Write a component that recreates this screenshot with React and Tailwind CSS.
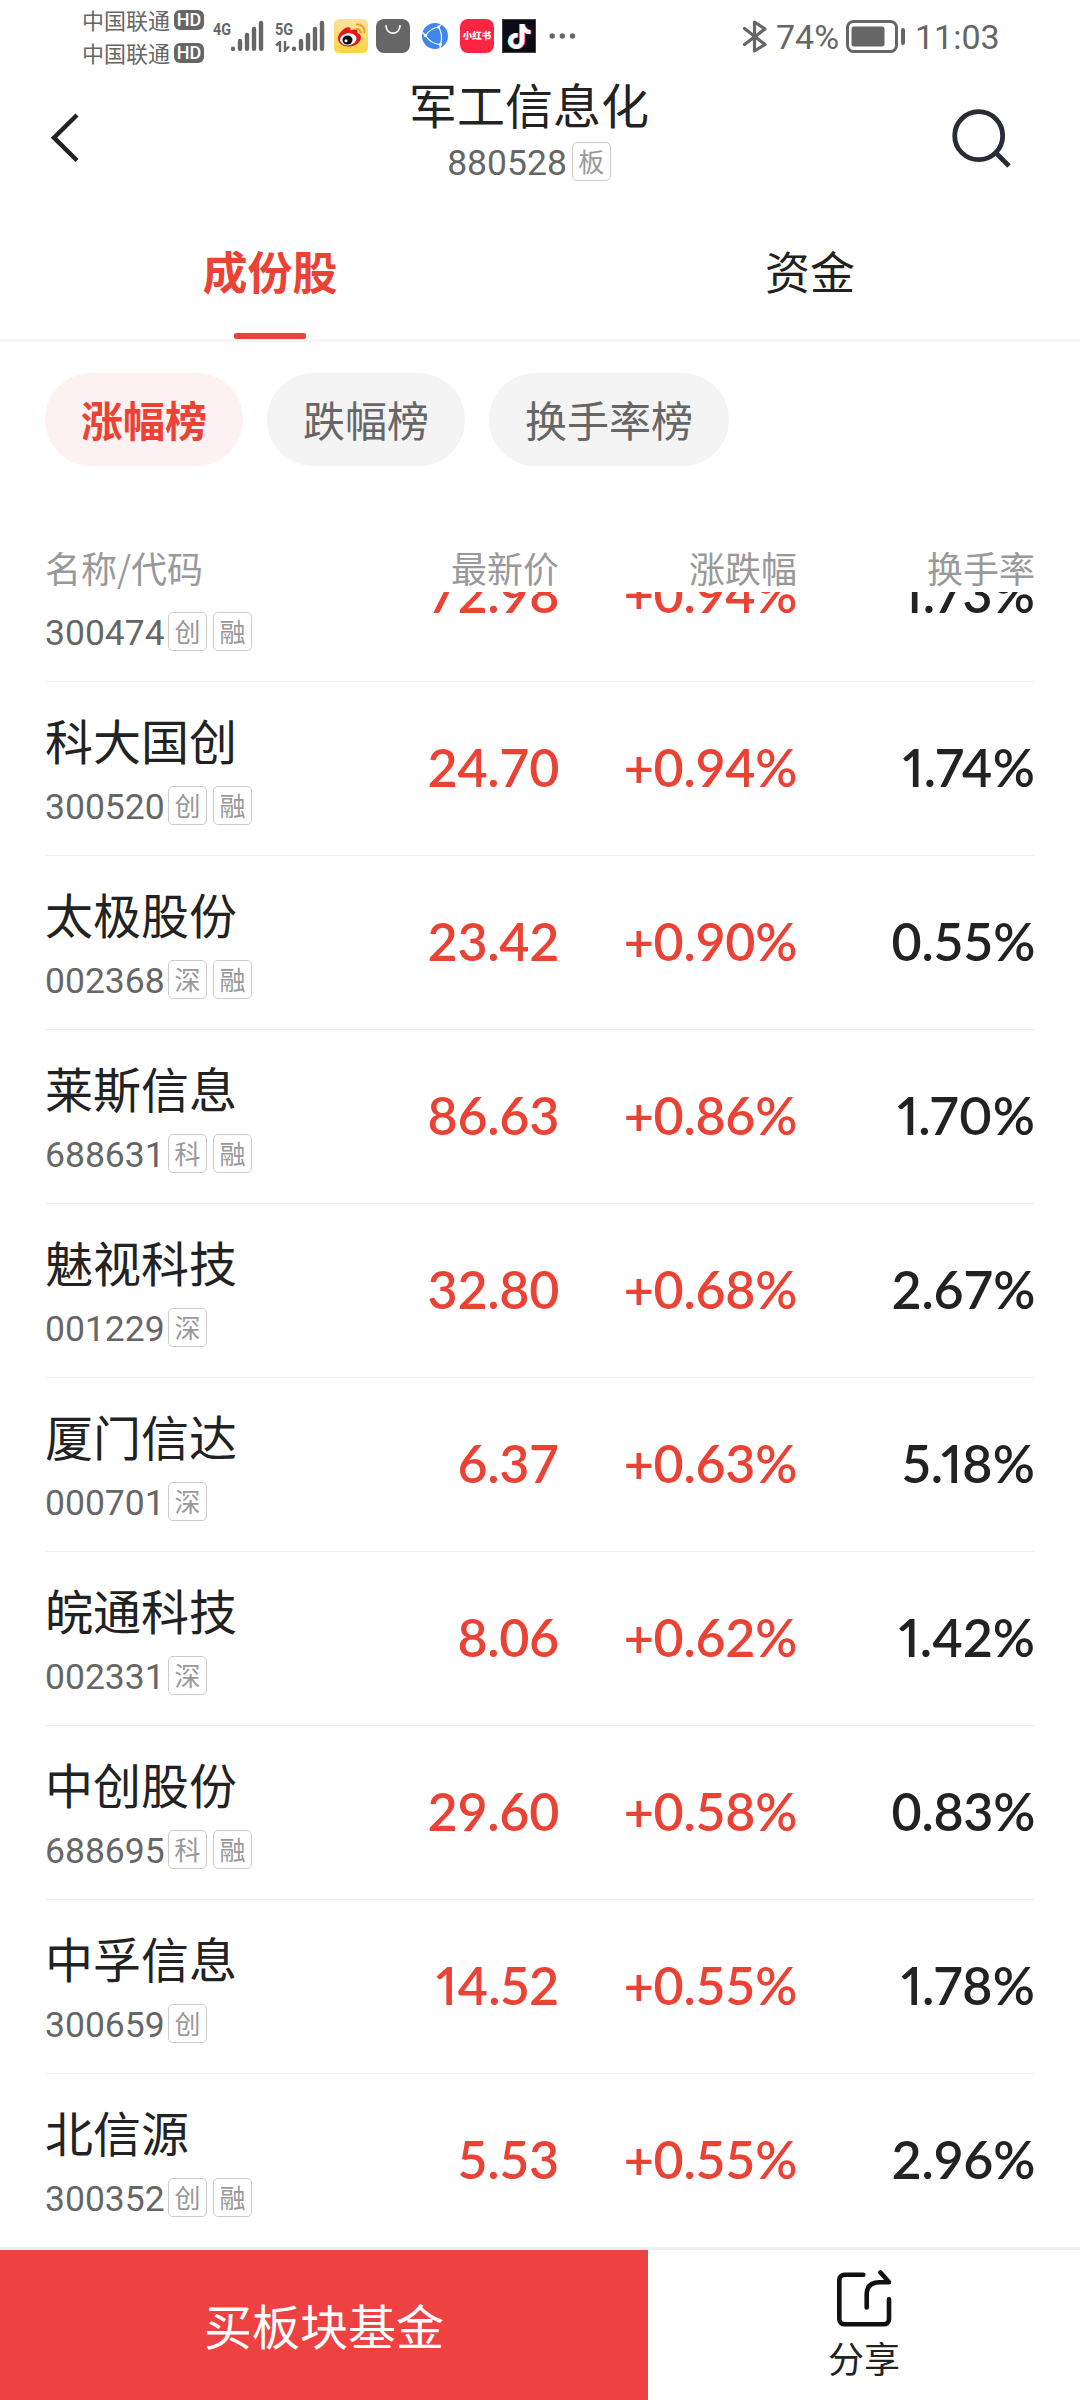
import React from 'react';
import { FaTiktok } from 'react-icons/fa6';

const STOCKS = [
  { name: '景嘉微', code: '300474', tags: ['创', '融'], price: '72.98', change: '+0.94%', turnover: '1.73%' },
  { name: '科大国创', code: '300520', tags: ['创', '融'], price: '24.70', change: '+0.94%', turnover: '1.74%' },
  { name: '太极股份', code: '002368', tags: ['深', '融'], price: '23.42', change: '+0.90%', turnover: '0.55%' },
  { name: '莱斯信息', code: '688631', tags: ['科', '融'], price: '86.63', change: '+0.86%', turnover: '1.70%' },
  { name: '魅视科技', code: '001229', tags: ['深'], price: '32.80', change: '+0.68%', turnover: '2.67%' },
  { name: '厦门信达', code: '000701', tags: ['深'], price: '6.37', change: '+0.63%', turnover: '5.18%' },
  { name: '皖通科技', code: '002331', tags: ['深'], price: '8.06', change: '+0.62%', turnover: '1.42%' },
  { name: '中创股份', code: '688695', tags: ['科', '融'], price: '29.60', change: '+0.58%', turnover: '0.83%' },
  { name: '中孚信息', code: '300659', tags: ['创'], price: '14.52', change: '+0.55%', turnover: '1.78%' },
  { name: '北信源', code: '300352', tags: ['创', '融'], price: '5.53', change: '+0.55%', turnover: '2.96%' },
];

const RANKINGS = ['涨幅榜', '跌幅榜', '换手率榜'];

function Carrier() {
  return (
    <div className="flex h-[33px] items-center">
      <span className="w-[92px] text-[22px] leading-[33px]">中国联通</span>
      <span className="flex h-5 w-[30px] items-center justify-center rounded-[6px] bg-[#666] font-['Roboto',sans-serif] text-[18px] leading-none font-medium text-white">
        HD
      </span>
    </div>
  );
}

function SignalBars() {
  return (
    <svg width="34" height="32" viewBox="0 0 34 32" stroke="#666" strokeWidth="4.4" strokeLinecap="round">
      <path d="M3 28.8v.1M10 21v7.8M17 15v13.8M24 9v19.8M31 3v25.8" />
    </svg>
  );
}

function WeiboIcon() {
  return (
    <svg width="34" height="34" viewBox="0 0 34 34">
      <defs>
        <linearGradient id="weibo" x1="0" y1="0" x2="0" y2="1">
          <stop offset="0" stopColor="#f8e3a0" />
          <stop offset="1" stopColor="#ffd43f" />
        </linearGradient>
      </defs>
      <rect width="34" height="34" rx="5" fill="url(#weibo)" />
      <path d="M4 19c0-4 5-9.5 9-10.5 3-.7 4 .8 3.500 3 4-1.8 8-1.500 7 2.500 3 1 4 3 3.200 6-1.400 5-6.700 7.500-12.200 7.500C8.500 27.500 4 24.500 4 19z" fill="#e6141d" />
      <ellipse cx="14.3" cy="20.2" rx="8.3" ry="6" fill="#fff" transform="rotate(-8 14.3 20.2)" />
      <ellipse cx="13.5" cy="21" rx="5" ry="4.6" fill="#0b0b0b" />
      <circle cx="12" cy="21.8" r="1.5" fill="#fff" />
      <path d="M22 10c3-.5 5 1.5 4.500 4.500M22 5.500c5.500-.8 9.300 3.500 8.500 8.500" fill="none" stroke="#eb9d27" strokeWidth="1.9" />
    </svg>
  );
}

function BagIcon() {
  return (
    <svg width="34" height="34" viewBox="0 0 34 34">
      <rect width="34" height="34" rx="8" fill="#666" />
      <path d="M10 7c.8 9.500 13.200 9.500 14 0" fill="none" stroke="#fff" strokeWidth="1.8" strokeLinecap="round" />
    </svg>
  );
}

function BrowserIcon() {
  return (
    <svg width="34" height="34" viewBox="0 0 34 34" fill="none" stroke="#fff">
      <circle cx="17" cy="17" r="13" fill="#3f87ec" stroke="none" />
      <path d="M20.500 8Q25.500 16 22.500 25.500M7.500 16.500Q13 9 20.500 8M7.500 16.500Q13 25 22.500 25.500M7.500 16.500L4 13M20.500 8L24 5M22.500 25.500L22 29" strokeWidth="1.2" />
      <g fill="#fff" stroke="none">
        <circle cx="20.5" cy="8" r="1.5" />
        <circle cx="7.5" cy="16.5" r="1.7" />
        <circle cx="22.5" cy="25.5" r="1.7" />
      </g>
    </svg>
  );
}

function TiktokIcon() {
  return (
    <div className="grid h-[34px] w-[34px] place-items-center border border-[#444] bg-[#0c0b16]">
      <FaTiktok size={25} className="col-start-1 row-start-1 -translate-x-px text-[#25f4ee]" />
      <FaTiktok size={25} className="col-start-1 row-start-1 translate-x-px text-[#fe2c55]" />
      <FaTiktok size={25} className="relative col-start-1 row-start-1 text-white" />
    </div>
  );
}

function StatusBar() {
  return (
    <div className="flex h-[74px] items-start pl-[82px] text-[#666]">
      <div className="w-[131px] pt-[3px]">
        <Carrier />
        <Carrier />
      </div>
      <div className="flex w-[62px] pt-5">
        <span className="w-[17px] origin-left scale-x-[.85] pt-px font-['Roboto',sans-serif] text-[17px] leading-[17px] font-bold">4G</span>
        <SignalBars />
      </div>
      <div className="flex w-[59px] pt-5">
        <div className="w-4">
          <span className="block origin-left scale-x-[.85] pt-px font-['Roboto',sans-serif] text-[17px] leading-[17px] font-bold">5G</span>
          <svg className="mt-[3px]" width="16" height="11" viewBox="0 0 16 11" fill="none" stroke="#666" strokeWidth="2.4">
            <path d="M1 4.500L5 1v10M10 0v9.500l4-4" />
          </svg>
        </div>
        <SignalBars />
      </div>
      <div className="flex gap-2 pt-[19px]">
        <WeiboIcon />
        <BagIcon />
        <BrowserIcon />
        <div className="flex h-[34px] w-[34px] items-center justify-center rounded-[8px] bg-[#fe2442]">
          <span className="text-[9.5px] leading-none font-black whitespace-nowrap text-white">小红书</span>
        </div>
        <TiktokIcon />
      </div>
      <svg className="mt-[31px] ml-[13px]" width="30" height="10" viewBox="0 0 30 10" fill="#666">
        <circle cx="3.2" cy="5" r="2.7" />
        <circle cx="13.3" cy="5" r="2.7" />
        <circle cx="23.5" cy="5" r="2.7" />
      </svg>
      <svg className="mt-[19px] ml-[162px]" width="28" height="34" viewBox="0 0 28 34" fill="none" stroke="#666" strokeWidth="3.2" strokeLinejoin="round" strokeLinecap="round">
        <path d="M3.500 9.500L24 25.500 13.500 32V3L24 10 3.500 25.500" />
      </svg>
      <span className="ml-[7px] w-[70px] pt-[17px] font-['Roboto',sans-serif] text-[34px] leading-10">74%</span>
      <svg className="mt-5" width="60" height="33" viewBox="0 0 60 33">
        <rect x="1.5" y="1.5" width="49" height="30" rx="6" fill="none" stroke="#666" strokeWidth="3" />
        <rect x="5.5" y="6.5" width="33" height="20" rx="2.5" fill="#666" />
        <rect x="55" y="8" width="4" height="17" rx="2" fill="#666" />
      </svg>
      <span className="ml-[9px] pt-[17px] font-['Roboto',sans-serif] text-[34px] leading-10">11:03</span>
    </div>
  );
}

function Tag({ children }) {
  return (
    <span className="flex h-[39px] w-[39px] items-center justify-center rounded-[5px] border-[1.5px] border-[#ccc] pb-[2px] text-[26px] leading-none text-[#999]">
      {children}
    </span>
  );
}

function Header() {
  return (
    <header className="flex h-[136px] items-start justify-between pr-[68px] pl-[48px]">
      <svg className="mt-[37px]" width="60" height="54" viewBox="0 0 60 54" fill="none" stroke="#222" strokeWidth="4.5">
        <path d="M29 4L6 26.700 29 49.500" />
      </svg>
      <div className="flex w-[320px] flex-col items-center">
        <h1 className="h-[68px] text-[48px] leading-[59px] text-[#222]">军工信息化</h1>
        <div className="flex h-[39px] items-center gap-[5px]">
          <span className="mt-1 font-['Roboto',sans-serif] text-[35.5px] leading-[39px] text-[#666]">880528</span>
          <Tag>板</Tag>
        </div>
      </div>
      <svg className="mt-[35px]" width="62" height="60" viewBox="0 0 62 60" fill="none" stroke="#292c35" strokeWidth="4.8">
        <circle cx="28.7" cy="26.7" r="24" />
        <path d="M46 44l13 13" />
      </svg>
    </header>
  );
}

function Tabs() {
  return (
    <nav className="flex h-[132px] border-b-[3px] border-[#f5f5f5] text-[45px] leading-[64px]">
      <div className="flex flex-1 flex-col items-center justify-between pt-[29px] font-bold text-[#ea4335]">
        <span>成份股</span>
        <span className="h-[6px] w-[72px] rounded-[2px] bg-[#e8443a]" />
      </div>
      <div className="flex-1 pt-[29px] text-center text-[#222]">资金</div>
    </nav>
  );
}

// Values with a "1" use its narrow form, the rest keep even digit widths
function Figure({ value }) {
  const narrow = value.includes('1');
  return <span className={narrow ? 'tracking-[0.1px] proportional-nums' : 'tracking-[-0.3px]'}>{value}</span>;
}

function StockRow({ stock }) {
  return (
    <li className="grid h-[174px] grid-cols-[260px_254px_238px_238px] items-center border-b border-[#eee] text-[#222]">
      <div className="pb-1 font-['Noto_Sans_CJK_SC',sans-serif] font-normal">
        <div className="h-[78px] text-[48px] leading-[62px] whitespace-nowrap">{stock.name}</div>
        <div className="flex h-[39px] items-center">
          <span className="mt-1 w-[123px] font-['Roboto',sans-serif] text-[35.5px] leading-[39px] text-[#666]">{stock.code}</span>
          <div className="flex gap-[6px]">
            {stock.tags.map((tag) => (
              <Tag key={tag}>{tag}</Tag>
            ))}
          </div>
        </div>
      </div>
      <div className="pb-[3px] text-right text-[#ea4335]">
        <Figure value={stock.price} />
      </div>
      <div className="pb-[3px] text-right text-[#ea4335]">
        <Figure value={stock.change} />
      </div>
      <div className="pb-[3px] text-right">
        <Figure value={stock.turnover} />
      </div>
    </li>
  );
}

function BottomBar() {
  return (
    <footer className="flex h-[153px] flex-shrink-0 border-t-[3px] border-[#eee] bg-white">
      <button className="w-[648px] bg-[#ee4242] pb-[3px] text-[48px] text-white">买板块基金</button>
      <button className="flex flex-1 flex-col items-center pt-[18px] text-[#222]">
        <svg width="60" height="62" viewBox="0 0 60 62" fill="none" stroke="#111" strokeWidth="4.6" strokeLinecap="round" strokeLinejoin="round">
          <path d="M29.300 6.700H10.500a5.200 5.200 0 0 0-5.200 5.200v39.200a5.200 5.200 0 0 0 5.200 5.200h39.300a5.200 5.200 0 0 0 5.200-5.200v-19.800" />
          <path d="M32.700 39.500v-13q0-12.300 13-12.300h9.300l-8.500-9.700" />
        </svg>
        <span className="text-[36px] leading-[54px]">分享</span>
      </button>
    </footer>
  );
}

export default function App() {
  return (
    <div className="flex h-[2400px] w-[1080px] flex-col overflow-hidden bg-white font-['Noto_Sans_CJK_SC',sans-serif]">
      <StatusBar />
      <Header />
      <Tabs />

      {/* Ranking filters */}
      <div className="mt-[31px] flex h-[93px] gap-6 pl-[45px] text-[42px] leading-[92px]">
        {RANKINGS.map((label, i) => (
          <span
            key={label}
            className={`rounded-full px-9 ${i === 0 ? 'bg-[#fef1f1] font-bold text-[#ea4335]' : 'bg-[#f4f4f4] text-[#666]'}`}
          >
            {label}
          </span>
        ))}
      </div>

      {/* Column titles */}
      <div className="mt-[76px] grid h-[50px] grid-cols-[260px_254px_238px_238px] pl-[45px] text-[36px] leading-[51px] text-[#999]">
        <span>名称/代码</span>
        <span className="text-right">最新价</span>
        <span className="text-right">涨跌幅</span>
        <span className="text-right">换手率</span>
      </div>

      {/* Scrolled list, first row sits partly under the titles */}
      <div className="min-h-0 flex-1 overflow-hidden px-[45px]">
        <ul className="-mt-[84px] font-['Lato','Noto_Sans_CJK_SC',sans-serif] text-[52px] leading-[50px] font-semibold">
          {STOCKS.map((stock) => (
            <StockRow key={stock.code} stock={stock} />
          ))}
        </ul>
      </div>

      <BottomBar />
    </div>
  );
}
